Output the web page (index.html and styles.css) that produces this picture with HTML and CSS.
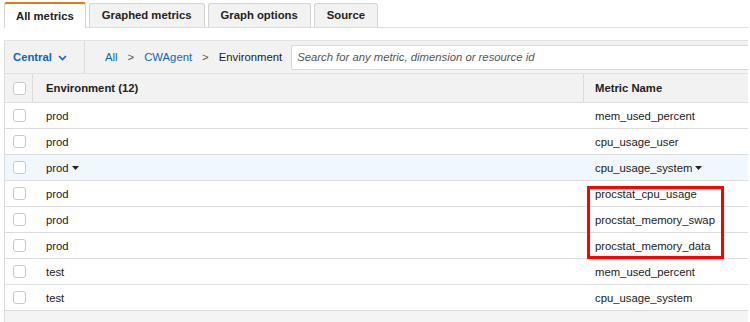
FILE: index.html
```html
<!DOCTYPE html>
<html>
<head>
<meta charset="utf-8">
<link rel="stylesheet" href="styles.css">
</head>
<body>
<div class="main">
  <div class="tabs">
    <div class="tab active">All metrics</div>
    <div class="tab">Graphed metrics</div>
    <div class="tab">Graph options</div>
    <div class="tab">Source</div>
  </div>
  <div class="toolbar">
    <div class="region">Central
      <svg class="chev" width="9" height="6" viewBox="0 0 9 6"><path d="M1 1 L4.5 4.5 L8 1" fill="none" stroke="#1166bb" stroke-width="1.6"/></svg>
    </div>
    <div class="crumbs">
      <span class="link">All</span><span class="sep">&gt;</span><span class="link">CWAgent</span><span class="sep">&gt;</span><span class="cur">Environment</span>
    </div>
    <div class="search">Search for any metric, dimension or resource id</div>
  </div>
  <div class="table">
    <div class="row head">
      <div class="cb-cell"><span class="cb"></span></div>
      <div class="cell env">Environment (12)</div>
      <div class="cell metric">Metric Name</div>
    </div>
    <div class="row"><div class="cb-cell"><span class="cb"></span></div><div class="cell env">prod</div><div class="cell metric">mem_used_percent</div></div>
    <div class="row"><div class="cb-cell"><span class="cb"></span></div><div class="cell env">prod</div><div class="cell metric">cpu_usage_user</div></div>
    <div class="row hl"><div class="cb-cell"><span class="cb"></span></div><div class="cell env">prod<svg class="caret" width="7" height="4" viewBox="0 0 7 4"><path d="M0 0 L7 0 L3.5 4 Z" fill="#222"/></svg></div><div class="cell metric">cpu_usage_system<svg class="caret" width="7" height="4" viewBox="0 0 7 4"><path d="M0 0 L7 0 L3.5 4 Z" fill="#222"/></svg></div></div>
    <div class="row"><div class="cb-cell"><span class="cb"></span></div><div class="cell env">prod</div><div class="cell metric">procstat_cpu_usage</div></div>
    <div class="row"><div class="cb-cell"><span class="cb"></span></div><div class="cell env">prod</div><div class="cell metric">procstat_memory_swap</div></div>
    <div class="row"><div class="cb-cell"><span class="cb"></span></div><div class="cell env">prod</div><div class="cell metric">procstat_memory_data</div></div>
    <div class="row"><div class="cb-cell"><span class="cb"></span></div><div class="cell env">test</div><div class="cell metric">mem_used_percent</div></div>
    <div class="row"><div class="cb-cell"><span class="cb"></span></div><div class="cell env">test</div><div class="cell metric">cpu_usage_system</div></div>
    <div class="row foot"></div>
    <div class="highlight-box"></div>
  </div>
</div>
</body>
</html>
```
FILE: styles.css
```css
* { box-sizing: border-box; }
html, body { margin: 0; padding: 0; background: #fff; }
body {
  font-family: "Liberation Sans", Arial, Helvetica, sans-serif;
  font-size: 11.3px;
  color: #222;
  overflow: hidden;
}
.main {
  padding: 3px 2px 0 4px;
}
.tabs {
  display: flex;
  gap: 3px;
  height: 25px;
  border-bottom: 1px solid #ddd;
  align-items: flex-end;
}
.tab {
  height: 24px;
  line-height: 23px;
  padding: 0 12px;
  border: 1px solid #d5d5d5;
  border-bottom: none;
  border-radius: 3px 3px 0 0;
  background: #f2f2f2;
  font-weight: bold;
  color: #222;
}
.tab.active {
  height: 26px;
  margin-bottom: -1px;
  background: #fff;
  border-top: 2px solid #e47911;
  line-height: 24px;
  padding: 0 11px;
}
.toolbar {
  margin-top: 12px;
  height: 33px;
  display: flex;
  align-items: center;
  background: #f2f2f2;
  border-top: 1px solid #e3e3e3;
  border-left: 1px solid #dcdcdc;
}
.region {
  width: 80px;
  height: 100%;
  display: flex;
  align-items: center;
  gap: 6px;
  padding-left: 8px;
  color: #1166bb;
  font-weight: bold;
  border-right: 1px solid #dcdcdc;
}
.chev { margin-top: 1px; }
.crumbs {
  display: flex;
  align-items: center;
  gap: 10px;
  padding-left: 20px;
  height: 100%;
}
.link { color: #1166bb; }
.sep { color: #555; }
.cur { color: #222; }
.search {
  margin-left: 9px;
  flex: 1;
  height: 25px;
  background: #fff;
  border: 1px solid #d8d8d8;
  border-right: none;
  border-radius: 2px 0 0 2px;
  display: flex;
  align-items: center;
  padding-left: 5px;
  font-style: italic;
  color: #555;
}
.table {
  position: relative;
  border-left: 1px solid #dcdcdc;
  border-top: 1px solid #e3e3e3;
}
.row {
  display: grid;
  grid-template-columns: 28px 551px 1fr;
  height: 26px;
  border-bottom: 1px solid #dedede;
  align-items: stretch;
}
.row.head {
  height: 29px;
  background: #f2f2f2;
  font-weight: bold;
  color: #222;
}
.row.hl { background: #f1f8fd; }
.row.foot {
  height: 12px;
  background: #f4f4f4;
  border-bottom: none;
}
.cb-cell {
  display: flex;
  align-items: center;
  padding-left: 8px;
}
.head .cb-cell { border-right: 1px solid #dcdcdc; }
.cb {
  width: 13px;
  height: 13px;
  border: 1px solid #c9c9c9;
  border-radius: 3px;
  background: #fff;
  display: block;
}
.cell {
  display: flex;
  align-items: center;
  gap: 3px;
}
.cell.env { padding-left: 13px; }
.head .cell.env { padding-left: 13px; border-right: 1px solid #dcdcdc; }
.cell.metric { padding-left: 11px; }
.caret { margin-top: 1px; }
.highlight-box {
  position: absolute;
  left: 582px;
  top: 112px;
  width: 137px;
  height: 73px;
  border: 3px solid #f00;
}
```
